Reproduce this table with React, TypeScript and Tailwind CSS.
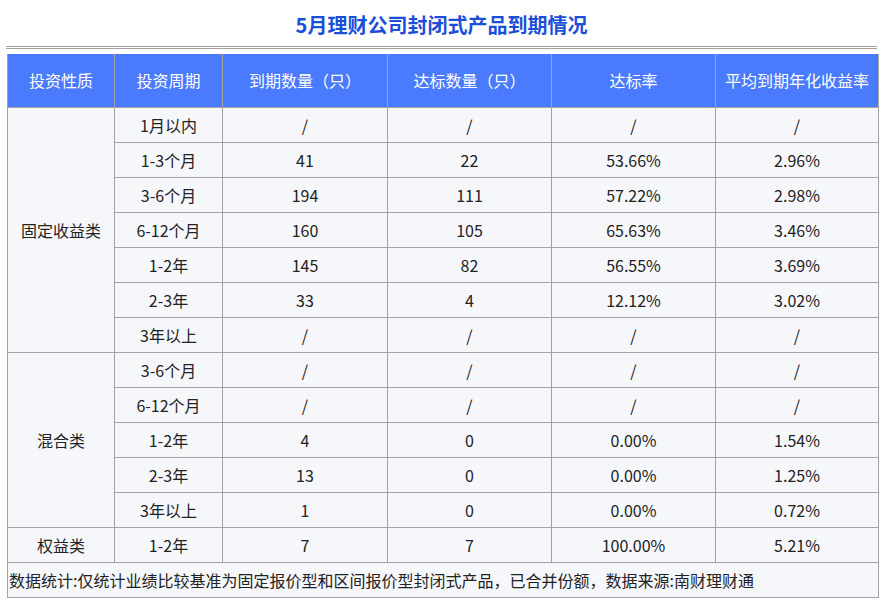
const headers = ["投资性质", "投资周期", "到期数量（只）", "达标数量（只）", "达标率", "平均到期年化收益率"];

type Row = [string, string, string, string, string];

const groups: { name: string; rows: Row[] }[] = [
  {
    name: "固定收益类",
    rows: [
      ["1月以内", "/", "/", "/", "/"],
      ["1-3个月", "41", "22", "53.66%", "2.96%"],
      ["3-6个月", "194", "111", "57.22%", "2.98%"],
      ["6-12个月", "160", "105", "65.63%", "3.46%"],
      ["1-2年", "145", "82", "56.55%", "3.69%"],
      ["2-3年", "33", "4", "12.12%", "3.02%"],
      ["3年以上", "/", "/", "/", "/"],
    ],
  },
  {
    name: "混合类",
    rows: [
      ["3-6个月", "/", "/", "/", "/"],
      ["6-12个月", "/", "/", "/", "/"],
      ["1-2年", "4", "0", "0.00%", "1.54%"],
      ["2-3年", "13", "0", "0.00%", "1.25%"],
      ["3年以上", "1", "0", "0.00%", "0.72%"],
    ],
  },
  {
    name: "权益类",
    rows: [["1-2年", "7", "7", "100.00%", "5.21%"]],
  },
];

const widths = ["w-[107px]", "w-[108px]", "w-[165px]", "w-[164px]", "w-[164px]", "w-[163px]"];

export default function App() {
  return (
    <div
      className="w-[883px] h-[606px] bg-white text-[#222] overflow-hidden"
      style={{ fontFamily: '"Microsoft YaHei", "Noto Sans CJK SC", "Noto Sans", sans-serif' }}
    >
      <h1 className="pt-[10px] h-[44px] text-center text-[20px] font-bold leading-[30px] text-[#1b4fd9]">
        5月理财公司封闭式产品到期情况
      </h1>
      <div className="mx-[6px] mt-[2px] h-[3px] border-y border-[#a3a3a3]" />
      <table className="ml-[7px] mt-[5px] w-[871px] border-collapse table-fixed text-[16px]">
        <colgroup>
          {widths.map((w, i) => (
            <col key={i} className={w} />
          ))}
        </colgroup>
        <thead>
          <tr className="h-[53px] bg-[#4a7bff] text-white">
            {headers.map((h) => (
              <th key={h} className="border border-[#a3a3a3] border-t-0 font-normal px-0 whitespace-nowrap">
                {h}
              </th>
            ))}
          </tr>
        </thead>
        <tbody className="bg-[#f6f7fb]">
          {groups.map((g) =>
            g.rows.map((r, i) => (
              <tr key={g.name + i} className="h-[35px]">
                {i === 0 && (
                  <td rowSpan={g.rows.length} className="border border-[#a3a3a3] text-center">
                    {g.name}
                  </td>
                )}
                {r.map((c, j) => (
                  <td key={j} className="border border-[#a3a3a3] text-center">
                    {c}
                  </td>
                ))}
              </tr>
            ))
          )}
          <tr className="h-[35px]">
            <td colSpan={6} className="border border-[#a3a3a3] px-[1px] text-left whitespace-nowrap">
              数据统计:仅统计业绩比较基准为固定报价型和区间报价型封闭式产品，已合并份额，数据来源:南财理财通
            </td>
          </tr>
        </tbody>
      </table>
    </div>
  );
}
